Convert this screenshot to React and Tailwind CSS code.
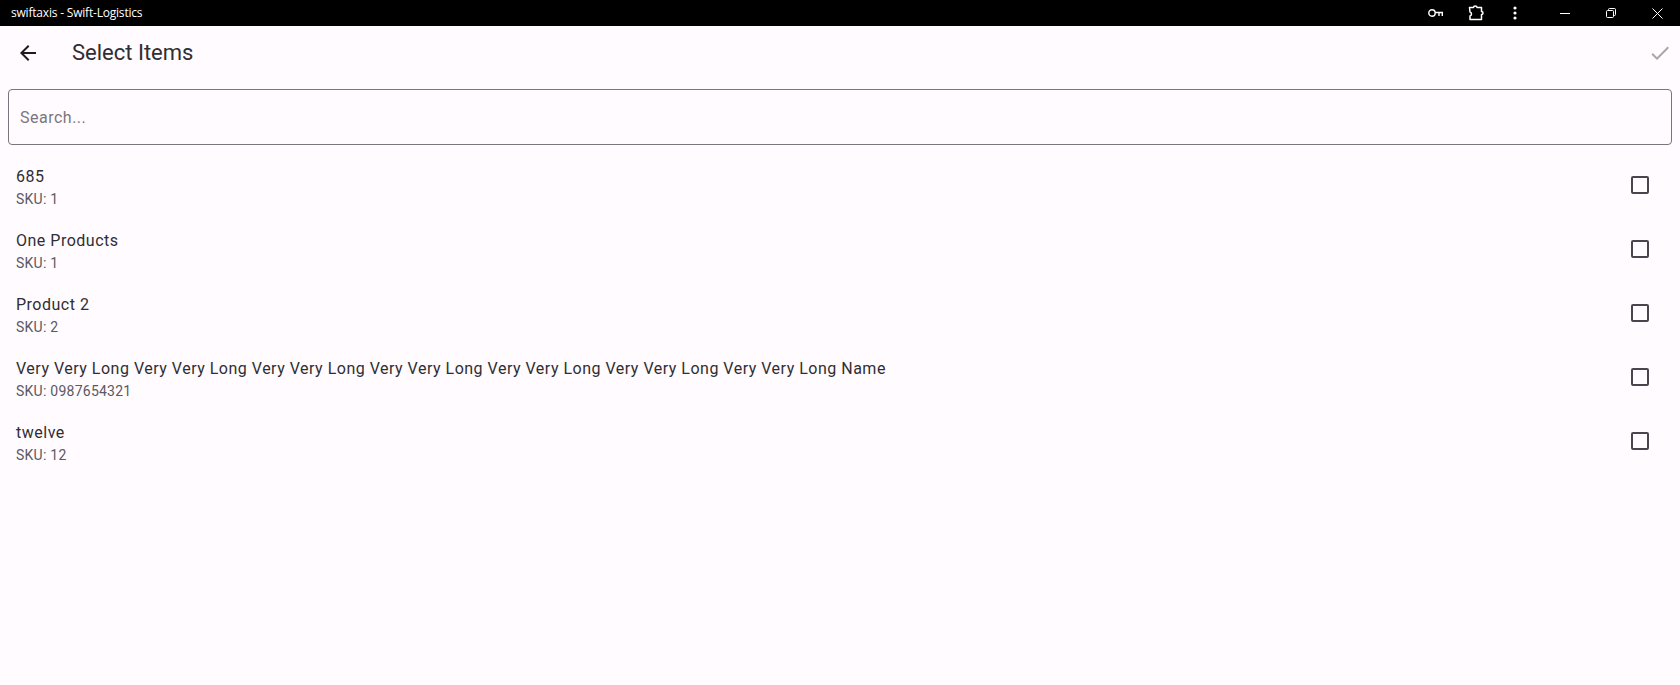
import React from "react";

const items = [
  ["685", "SKU: 1"],
  ["One Products", "SKU: 1"],
  ["Product 2", "SKU: 2"],
  ["Very Very Long Very Very Long Very Very Long Very Very Long Very Very Long Very Very Long Very Very Long Name", "SKU: 0987654321"],
  ["twelve", "SKU: 12"],
];

export default function App() {
  return (
    <div className="h-[685px] w-[1680px] overflow-hidden flex flex-col bg-[#fffbfe] font-['Roboto',sans-serif]">
      <div className="h-[26px] shrink-0 bg-black flex items-center text-white">
        <div className="pl-[11px] text-[12px] tracking-[-0.2px] font-['Open_Sans',sans-serif] flex-1 leading-none">swiftaxis - Swift-Logistics</div>
        <svg className="w-[15px] h-[8px] mr-[25px]" viewBox="0 0 15 8" fill="none" stroke="#fff" strokeWidth="1.400">
          <circle cx="4" cy="4" r="3.200" />
          <path d="M7 3.500h7.300v3.500M11 3.500v3.500" />
        </svg>
        <svg className="w-[16px] h-[16px] mr-[29px]" viewBox="0 0 16 16" fill="none" stroke="#fff" strokeWidth="1.500" strokeLinejoin="round">
          <path d="M1.500 2.500h4c0-2 3.500-2 3.500 0h4.500v4c2 0 2 3 0 3v5H2v-3.500c2-.5 2-3.500 0-4z" />
        </svg>
        <svg className="w-[4px] h-[14px] mr-[43px]" viewBox="0 0 4 14" fill="#fff">
          <circle cx="2" cy="2" r="1.600" />
          <circle cx="2" cy="7" r="1.600" />
          <circle cx="2" cy="12" r="1.600" />
        </svg>
        <div className="w-[10px] h-px bg-white mr-[36px]" />
        <svg className="w-[10px] h-[10px] mr-[36px]" viewBox="0 0 10 10" fill="none" stroke="#fff" strokeWidth="1">
          <rect x="0.500" y="2.500" width="7" height="7" rx="1" />
          <path d="M2.500 2.500V1.500a1 1 0 0 1 1-1h5a1 1 0 0 1 1 1v5a1 1 0 0 1-1 1h-1" />
        </svg>
        <svg className="w-[11px] h-[11px] mr-[17px]" viewBox="0 0 11 11" fill="none" stroke="#fff" strokeWidth="1">
          <path d="M.5.500l10 10M10.500.500l-10 10" />
        </svg>
      </div>

      <div className="h-[54px] shrink-0 flex items-center">
        <svg className="w-[24px] h-[24px] ml-[16px] shrink-0" viewBox="0 0 24 24" fill="#1c1b1f">
          <path d="M20 11H7.830l5.590-5.590L12 4l-8 8 8 8 1.410-1.410L7.830 13H20v-2z" />
        </svg>
        <div className="ml-[32px] text-[22px] leading-[28px] text-[#2f2e32] flex-1">Select Items</div>
        <svg className="w-[24px] h-[24px] mr-[8px] shrink-0" viewBox="0 0 24 24" fill="#1c1b1f" fillOpacity="0.38">
          <path d="M9 16.170L4.830 12l-1.420 1.410L9 19 21 7l-1.410-1.410z" />
        </svg>
      </div>

      <div className="px-[8px] pt-[9px] pb-[8px] shrink-0">
        <div className="h-[56px] border border-[#79747e] rounded-[4px] flex items-center pl-[11px] pt-[2px] text-[16px] tracking-[0.5px] text-[#7a7680]">
          Search...
        </div>
      </div>

      <div className="flex flex-col">
        {items.map(([name, sku]) => (
          <div key={name} className="h-[64px] flex items-center pl-[16px] pr-[31px]">
            <div className="flex-1 min-w-0 pt-[4px]">
              <div className="text-[16px] leading-[24px] tracking-[0.5px] text-[#2f2e32]">{name}</div>
              <div className="text-[14px] leading-[20px] tracking-[0.25px] text-[#5c5862]">{sku}</div>
            </div>
            <div className="w-[18px] h-[18px] border-2 border-[#49454f] rounded-[2px] shrink-0" />
          </div>
        ))}
      </div>
    </div>
  );
}
